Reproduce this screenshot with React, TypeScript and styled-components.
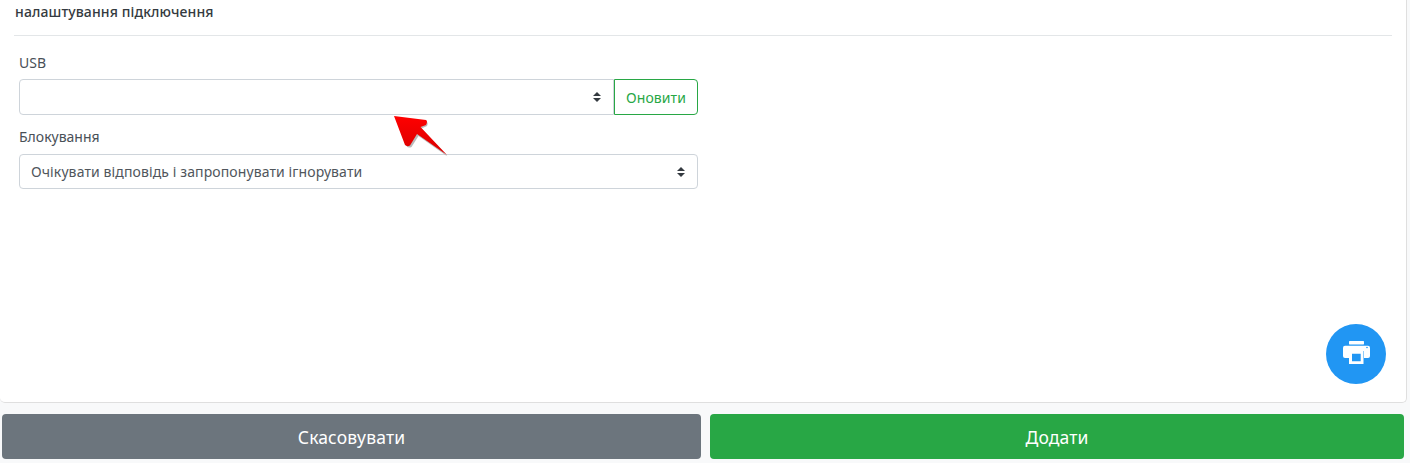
import React from 'react';
import styled, { createGlobalStyle } from 'styled-components';

const caret = "url(\"data:image/svg+xml,%3csvg xmlns='http://www.w3.org/2000/svg' width='4' height='5' viewBox='0 0 4 5'%3e%3cpath fill='%23343a40' d='M2 0L0 2h4zm0 5L0 3h4z'/%3e%3c/svg%3e\")";

const GlobalStyle = createGlobalStyle`
    html, body {
        margin: 0;
        padding: 0;
        background-color: #f8f9fa;
    }
    body {
        font-family: "Noto Sans", "Open Sans", sans-serif;
        font-size: 14px;
        color: #495057;
    }
`;
const Page = styled.div`
    width: 1410px;
    height: 463px;
    overflow: hidden;
    position: relative;
`;
const Card = styled.div`
    width: 1407px;
    height: 403px;
    box-sizing: border-box;
    background-color: white;
    border: 1px solid #dfdfdf;
    border-top: none;
    border-left: none;
    border-radius: 0 0 5px 5px;
    padding: 0 14px;
`;
const Title = styled.div`
    height: 36px;
    box-sizing: border-box;
    padding: 2px 1px 0;
    line-height: 20px;
    font-size: 14px;
    font-weight: 500;
    letter-spacing: 0.12px;
    color: #343a40;
    border-bottom: 1px solid #e3e6e8;
`;
const Form = styled.div`
    width: 679px;
    margin-left: 5px;
    padding-top: 17px;
`;
const Label = styled.label<{ $gap: number }>`
    display: block;
    height: 20px;
    line-height: 20px;
    margin-bottom: ${(p) => p.$gap}px;
    color: #495057;
`;
const Row = styled.div`
    display: flex;
    margin-bottom: 12px;
`;
const Select = styled.select<{ $grouped?: boolean; $height: number }>`
    flex: 1;
    min-width: 0;
    height: ${(p) => p.$height}px;
    box-sizing: border-box;
    appearance: none;
    padding: 0 28px 0 11px;
    font: inherit;
    letter-spacing: 0.11px;
    color: #50565c;
    background: white ${caret} no-repeat right 12px center / 8px 10px;
    border: 1px solid #ced4da;
    border-radius: ${(p) => (p.$grouped ? '4px 0 0 4px' : '4px')};
`;
const RefreshButton = styled.button`
    width: 84px;
    height: 36px;
    box-sizing: border-box;
    padding: 0;
    font: inherit;
    letter-spacing: 0.1px;
    color: #28a745;
    background: white;
    border: 1px solid #28a745;
    border-radius: 0 4px 4px 0;
`;
const Arrow = styled.svg`
    position: absolute;
    left: 390px;
    top: 110px;
`;
const PrintFab = styled.button`
    position: absolute;
    left: 1326px;
    top: 324px;
    width: 60px;
    height: 60px;
    padding: 0 0 3px;
    border: none;
    border-radius: 50%;
    background-color: #2196f3;
    display: flex;
    align-items: center;
    justify-content: center;
`;
const Actions = styled.div`
    display: flex;
    gap: 9px;
    padding: 11px 0 0 2px;
`;
const ActionButton = styled.button<{ $color: string; $width: number }>`
    width: ${(p) => p.$width}px;
    height: 45px;
    padding: 0;
    border: none;
    border-radius: 4px;
    font-family: inherit;
    font-size: 17.5px;
    letter-spacing: 0.15px;
    color: white;
    background-color: ${(p) => p.$color};
`;

const PrinterIcon = () => (
    <svg width="27" height="23" viewBox="0 0 27 23">
        <rect x="6" y="0" width="15" height="3.4" rx="0.6" fill="white" />
        <rect x="0" y="4.7" width="27" height="12.2" rx="2" fill="white" />
        <rect x="6" y="10" width="15" height="13" fill="#2196f3" />
        <path fillRule="evenodd" fill="white" d="M6 10h14.500v13H6zM9 12.700v7.500h8.700v-7.500z" />
        <circle cx="24" cy="6.500" r="0.8" fill="#2196f3" />
    </svg>
);

const App = () => {
    return <Page>
        <GlobalStyle />
        <Card>
            <Title>налаштування підключення</Title>
            <Form>
                <Label $gap={6}>USB</Label>
                <Row>
                    <Select $grouped $height={36}><option></option></Select>
                    <RefreshButton>Оновити</RefreshButton>
                </Row>
                <Label $gap={7}>Блокування</Label>
                <Row>
                    <Select $height={35}><option>Очікувати відповідь і запропонувати ігнорувати</option></Select>
                </Row>
            </Form>
        </Card>
        <Arrow width="62" height="50" viewBox="0 0 62 50">
            <defs>
                <linearGradient id="arrowFill" x1="0" y1="0" x2="0" y2="1">
                    <stop offset="0" stopColor="#ff0000" />
                    <stop offset="1" stopColor="#d80000" />
                </linearGradient>
            </defs>
            <path d="M5 6L36 10.5Q38 12 36.500 15L31 17.500L57 45.500L28 25L21 36Q18 37.500 16 35Z" fill="#8c8c8c" opacity="0.6" transform="translate(0.5 1)" />
            <path d="M4 6L36 10Q38 11 36 15L30.500 17L57 45L27 24L20 35.500Q17 37 15 35Z" fill="url(#arrowFill)" />
        </Arrow>
        <PrintFab><PrinterIcon /></PrintFab>
        <Actions>
            <ActionButton $color="#6c757d" $width={699}>Скасовувати</ActionButton>
            <ActionButton $color="#28a745" $width={694}>Додати</ActionButton>
        </Actions>
    </Page>;
}

export default App;
